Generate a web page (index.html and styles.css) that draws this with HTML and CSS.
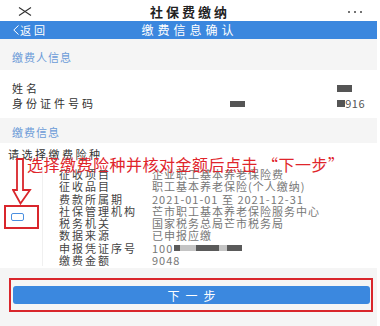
FILE: index.html
```html
<!DOCTYPE html>
<html>
<head>
    <meta charset="utf-8">
    <meta name="viewport" content="width=device-width, initial-scale=1">
    <title>社保费缴纳</title>
    <link rel="stylesheet" href="styles.css">
</head>
<body>
    <div class="app">
        <div class="title-bar">
            <svg class="close-icon" width="14" height="9" viewBox="0 0 14 9">
                <path d="M1 0.5 L13 8.5 M13 0.5 L1 8.5" stroke="#333" stroke-width="1.1" fill="none"/>
            </svg>
            <div class="title">社保费缴纳</div>
            <div class="more"><i></i><i></i><i></i></div>
        </div>
        <div class="nav-bar">
            <div class="back">
                <svg width="6" height="10" viewBox="0 0 6 10">
                    <path d="M5.5 0.5 L0.8 5 L5.5 9.5" stroke="#fff" stroke-width="1" fill="none"/>
                </svg>
                <span>返回</span>
            </div>
            <div class="nav-title">缴费信息确认</div>
            <div></div>
        </div>

        <div class="group-title first">缴费人信息</div>
        <div class="info-card">
            <div class="info-row">
                <span>姓名</span>
                <span class="name-value"><span class="mask mask-name"></span></span>
            </div>
            <div class="info-row">
                <span>身份证件号码</span>
                <span class="id-value">
                    <span class="mask mask-id-a"></span>
                    <span class="mask mask-id-b"></span>916
                </span>
            </div>
        </div>

        <div class="group-title second">缴费信息</div>
        <div class="pay-card">
            <div class="choose-tip">请选择缴费险种</div>
            <div class="pay-body">
                <div class="pick-col">
                    <div class="pick-box"><span class="checkbox"></span></div>
                </div>
                <div class="pay-rows">
                    <div class="pay-row"><span class="label">征收项目</span><span class="value">企业职工基本养老保险费</span></div>
                    <div class="pay-row"><span class="label">征收品目</span><span class="value">职工基本养老保险(个人缴纳)</span></div>
                    <div class="pay-row"><span class="label">费款所属期</span><span class="value">2021-01-01 至 2021-12-31</span></div>
                    <div class="pay-row"><span class="label">社保管理机构</span><span class="value">芒市职工基本养老保险服务中心</span></div>
                    <div class="pay-row"><span class="label">税务机关</span><span class="value">国家税务总局芒市税务局</span></div>
                    <div class="pay-row"><span class="label">数据来源</span><span class="value">已申报应缴</span></div>
                    <div class="pay-row"><span class="label">申报凭证序号</span><span class="value">100<span class="blur dark w6"></span><span class="blur light w16"></span><span class="blur dark w23"></span><span class="blur light w8"></span><span class="blur dark w15"></span></span></div>
                    <div class="pay-row"><span class="label">缴费金额</span><span class="value">9048</span></div>
                </div>
            </div>

            <svg class="mark-arrow" width="22" height="47" viewBox="0 0 22 47">
                <path d="M5 1 L11 1 L11 32 L18 32 L8.5 45.5 L1 32 L5 32 Z" stroke="#d9262c" stroke-width="1.8" fill="none" stroke-linejoin="miter"/>
            </svg>
            <div class="mark-text">选择缴费险种并核对金额后点击 “下一步”</div>
        </div>

        <div class="footer">
            <div class="footer-box">
                <button class="next-btn">下一步</button>
            </div>
        </div>
    </div>
</body>
</html>
```

FILE: styles.css
```css
body {
    margin: 0;
    background-color: #fff;
    font-family: "Noto Sans CJK SC", "Noto Sans", sans-serif;
}
.app {
    width: 377px;
    height: 326px;
    background-color: #f5f5f5;
    overflow: hidden;
}
.title-bar {
    box-sizing: border-box;
    height: 21px;
    padding: 2px 15px 0 18px;
    background-color: #fff;
    display: grid;
    grid-template-columns: 1fr auto 1fr;
    align-items: center;
}
.title {
    font-size: 13px;
    font-weight: bold;
    letter-spacing: 3px;
    line-height: 16px;
    color: #222;
}
.more {
    display: flex;
    justify-content: flex-end;
    gap: 4px;
}
.more i {
    width: 2px;
    height: 2px;
    border-radius: 50%;
    background-color: #444;
}
.nav-bar {
    box-sizing: border-box;
    height: 18px;
    padding: 0 15px 0 13px;
    background-color: #3b87de;
    color: #fff;
    display: grid;
    grid-template-columns: 1fr auto 1fr;
    align-items: center;
}
.back {
    display: flex;
    align-items: center;
    gap: 1px;
    font-size: 11px;
    letter-spacing: 3px;
    line-height: 14px;
}
.nav-title {
    font-size: 12px;
    letter-spacing: 4px;
    line-height: 14px;
    margin-right: -4px;
}
.group-title {
    padding-left: 12px;
    font-size: 11px;
    line-height: 14px;
    letter-spacing: 1px;
    color: #6b9bd8;
}
.group-title.first {
    padding-top: 11px;
    padding-bottom: 6px;
}
.group-title.second {
    padding-top: 7px;
    padding-bottom: 4px;
}
.info-card {
    background-color: #fff;
    padding: 11px 12px 7px 12px;
    font-size: 11px;
    line-height: 15px;
    color: #333;
}
.info-row {
    display: flex;
    justify-content: space-between;
    align-items: center;
    letter-spacing: 3px;
}
.name-value {
    margin-right: 13px;
    display: flex;
}
.id-value {
    display: flex;
    align-items: center;
    letter-spacing: 0.5px;
    color: #555;
}
.mask {
    display: inline-block;
    background-color: #555;
}
.mask-name {
    width: 15px;
    height: 7px;
}
.mask-id-a {
    width: 15px;
    height: 6px;
    margin-right: 92px;
}
.mask-id-b {
    width: 8px;
    height: 7px;
}
.pay-card {
    position: relative;
    background-color: #fff;
    padding-bottom: 2px;
}
.choose-tip {
    padding: 4px 0 0 8px;
    font-size: 11px;
    line-height: 14px;
    letter-spacing: 2.5px;
    color: #333;
}
.pay-body {
    display: flex;
    margin-top: 7px;
}
.pick-col {
    width: 43px;
    padding-left: 4px;
    box-sizing: border-box;
    border-right: 1px solid #f0f0f0;
    display: flex;
    align-items: center;
}
.pick-box {
    box-sizing: border-box;
    width: 35px;
    height: 24px;
    border: 2px solid #d9262c;
    padding-left: 5px;
    display: flex;
    align-items: center;
}
.checkbox {
    box-sizing: border-box;
    width: 13px;
    height: 8px;
    border: 1px solid #4a8fe0;
    border-radius: 2px;
}
.pay-rows {
    padding-left: 16px;
}
.pay-row {
    display: flex;
    font-size: 11px;
    line-height: 12.3px;
}
.label {
    width: 93px;
    flex-shrink: 0;
    letter-spacing: 2px;
    color: #444;
}
.value {
    display: flex;
    align-items: center;
    letter-spacing: 1px;
    color: #777;
    white-space: nowrap;
}
.blur {
    display: inline-block;
    height: 6px;
}
.blur.dark {
    background-color: #5a5a5a;
}
.blur.light {
    background-color: #c4c4c4;
}
.w6 { width: 6px; margin-left: 1px; }
.w8 { width: 8px; }
.w15 { width: 15px; }
.w16 { width: 16px; }
.w23 { width: 23px; }
.mark-arrow {
    position: absolute;
    left: 12px;
    top: 15px;
}
.mark-text {
    position: absolute;
    left: 27px;
    top: 13px;
    font-size: 16px;
    line-height: 16px;
    letter-spacing: 0.5px;
    color: #e0252b;
    white-space: nowrap;
}
.footer {
    padding: 10px 4px 0 9px;
}
.footer-box {
    border: 2px solid #d9262c;
    padding: 6px 1px 6px 2px;
}
.next-btn {
    display: block;
    width: 100%;
    height: 18px;
    padding: 0;
    border: none;
    border-radius: 3px;
    background-color: #3b88df;
    color: #fff;
    font-family: "Noto Sans CJK SC", sans-serif;
    font-size: 12px;
    letter-spacing: 6px;
    text-indent: 6px;
}
```
